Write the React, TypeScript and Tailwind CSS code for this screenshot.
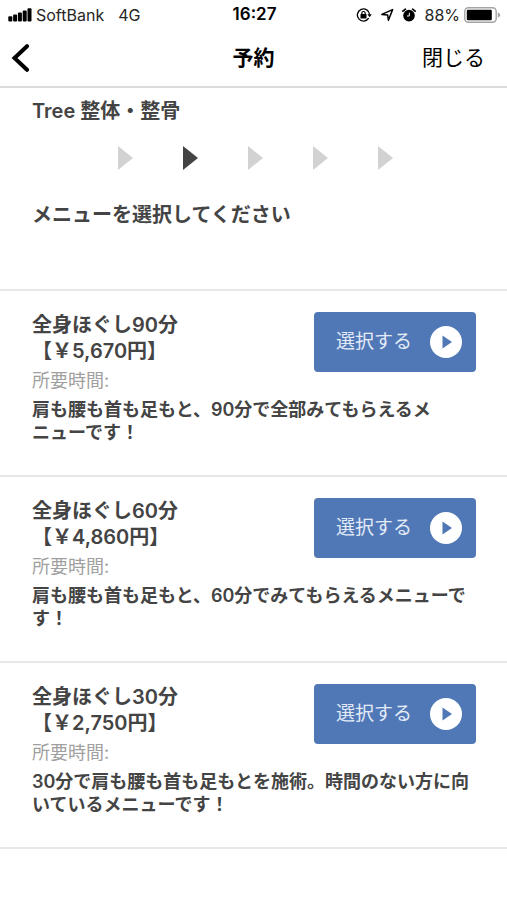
import { clsx } from 'clsx';

const menus = [
    {
        id: 'body-90',
        name: '全身ほぐし90分',
        price: '【￥5,670円】',
        description: '肩も腰も首も足もと、90分で全部みてもらえるメニューです！',
    },
    {
        id: 'body-60',
        name: '全身ほぐし60分',
        price: '【￥4,860円】',
        description: '肩も腰も首も足もと、60分でみてもらえるメニューです！',
    },
    {
        id: 'body-30',
        name: '全身ほぐし30分',
        price: '【￥2,750円】',
        description: '30分で肩も腰も首も足もとを施術。時間のない方に向いているメニューです！',
    },
];

const STEPS = 5;
const CURRENT_STEP = 1;

function SignalIcon() {
    return (
        <svg viewBox="0 0 24 14" className="h-[14px] w-6" fill="currentColor" aria-hidden="true">
            <rect x="0.3" y="8.2" width="4" height="5.3" rx="1" />
            <rect x="5.1" y="6.6" width="4" height="6.9" rx="1" />
            <rect x="9.9" y="4.6" width="4" height="8.9" rx="1" />
            <rect x="14.7" y="2.4" width="4" height="11.1" rx="1" />
            <rect x="19.5" y="0.3" width="4" height="13.2" rx="1" />
        </svg>
    );
}

function RotationLockIcon() {
    return (
        <svg viewBox="0 0 16 14" className="h-[14px] w-4" fill="none" stroke="currentColor" aria-hidden="true">
            <path d="M12.7 10.2A6.1 6.1 0 1 1 13.6 6.6" strokeWidth="1.3" />
            <path d="M11.4 6.3h4.3l-2.1 2.9z" fill="currentColor" stroke="none" />
            <rect x="4.5" y="6" width="6" height="4.4" rx="0.5" fill="currentColor" stroke="none" />
            <path d="M5.8 6.4V5.2a1.7 1.7 0 0 1 3.4 0v1.2" strokeWidth="1.2" />
        </svg>
    );
}

function LocationIcon() {
    return (
        <svg viewBox="0 0 14 14" className="size-[14px]" fill="none" stroke="currentColor" aria-hidden="true">
            <path d="M12.6 1.6 8.4 12.2 7.7 7.1 1.8 6.4z" strokeWidth="1.5" strokeLinejoin="round" />
        </svg>
    );
}

function AlarmIcon() {
    return (
        <svg viewBox="0 0 14 14" className="size-[14px]" fill="none" stroke="currentColor" aria-hidden="true">
            <circle cx="7" cy="7.6" r="5.8" fill="currentColor" stroke="none" />
            <path d="M0.9 3.2 3.4 1.2M13.1 3.2 10.6 1.2" strokeWidth="1.7" strokeLinecap="round" />
            <path d="M7.3 4.8v3.2H4.9" stroke="white" strokeWidth="1" />
        </svg>
    );
}

function BatteryIcon() {
    return (
        <svg viewBox="0 0 37 16" className="h-4 w-[37px]" aria-hidden="true">
            <rect x="0.8" y="0.8" width="31.4" height="14.4" rx="3.6" fill="none" stroke="#a3a3a3" strokeWidth="1.4" />
            <rect x="2.8" y="2.8" width="25" height="10.4" rx="1.2" fill="black" />
            <path d="M33.8 5.4c1.8.6 2.4 1.6 2.4 2.6s-.6 2-2.4 2.6z" fill="#a3a3a3" />
        </svg>
    );
}

function StatusBar() {
    return (
        <div className="grid h-[30px] grid-cols-[1fr_auto_1fr] items-center pr-1.5 pl-2 text-base text-black">
            <div className="flex items-center gap-1">
                <SignalIcon />
                <span className="text-neutral-800">SoftBank</span>
                <span className="ml-2.5 text-neutral-800">4G</span>
            </div>
            <span className="text-[17px] font-semibold">16:27</span>
            <div className="flex items-center justify-end gap-2">
                <RotationLockIcon />
                <LocationIcon />
                <AlarmIcon />
                <div className="flex items-center gap-1">
                    <span className="text-neutral-800">88%</span>
                    <BatteryIcon />
                </div>
            </div>
        </div>
    );
}

function NavBar() {
    return (
        <header className="grid h-[58px] grid-cols-[1fr_auto_1fr] items-center border-b-2 border-[#dcdcdc] px-[22px] text-black">
            <button type="button" aria-label="戻る" className="-ml-3 justify-self-start">
                <svg viewBox="0 0 20 28" className="h-7 w-5" fill="none" stroke="currentColor" strokeWidth="4" aria-hidden="true">
                    <path d="M17 2.2 4.5 14 17 25.8" strokeLinecap="round" />
                </svg>
            </button>
            <h1 className="text-[21px] font-bold">予約</h1>
            <button type="button" className="justify-self-end text-[21px]">
                閉じる
            </button>
        </header>
    );
}

function StepArrows() {
    return (
        <ol className="mt-[22px] flex justify-center gap-[50px] pl-1">
            {Array.from({ length: STEPS }, (_, i) => (
                <li key={i} aria-current={i === CURRENT_STEP ? 'step' : undefined}>
                    <svg
                        viewBox="0 0 15 24"
                        className={clsx('h-6 w-[15px]', i === CURRENT_STEP ? 'text-[#444444]' : 'text-[#d2d2d2]')}
                        fill="currentColor"
                        aria-hidden="true"
                    >
                        <path d="M0 0 15 12 0 24z" />
                    </svg>
                </li>
            ))}
        </ol>
    );
}

function MenuItem({ menu }: { menu: (typeof menus)[number] }) {
    return (
        <li className="border-b-2 border-[#e8e8e8] pt-[21px] pr-[31px] pb-[31px] pl-8">
            <div className="flex items-start justify-between">
                <div>
                    <h3 className="text-xl/[26px] font-semibold">
                        {menu.name}
                        <br />
                        {menu.price}
                    </h3>
                    <p className="mt-1 text-lg/[26px] text-[#a0a0a0]">所要時間:</p>
                </div>
                <button
                    type="button"
                    className="flex h-[60px] w-[162px] items-center justify-between rounded-[4px] bg-[#5178b6] pr-[14px] pl-[22px] text-[19px] text-[#e3ebf8]"
                >
                    選択する
                    <svg viewBox="0 0 32 32" className="size-8" aria-hidden="true">
                        <circle cx="16" cy="16" r="16" fill="white" />
                        <path d="M12.5 9.5 22 16l-9.5 6.5z" fill="#5178b6" />
                    </svg>
                </button>
            </div>
            <p className="mt-1 text-lg/[23px] font-semibold [line-break:strict]">{menu.description}</p>
        </li>
    );
}

export default function App() {
    return (
        <div
            lang="ja"
            className="min-h-screen bg-white font-['Inter','Noto_Sans_CJK_JP',sans-serif] text-[#444444]"
        >
            <StatusBar />
            <NavBar />
            <main>
                <section className="border-b-2 border-[#e8e8e8] px-8 pt-[10px] pb-[61px]">
                    <p className="text-xl/[26px] font-semibold">Tree 整体・整骨</p>
                    <StepArrows />
                    <h2 className="mt-8 text-xl/[26px] font-semibold">メニューを選択してください</h2>
                </section>
                <ul>
                    {menus.map((menu) => (
                        <MenuItem key={menu.id} menu={menu} />
                    ))}
                </ul>
            </main>
        </div>
    );
}
